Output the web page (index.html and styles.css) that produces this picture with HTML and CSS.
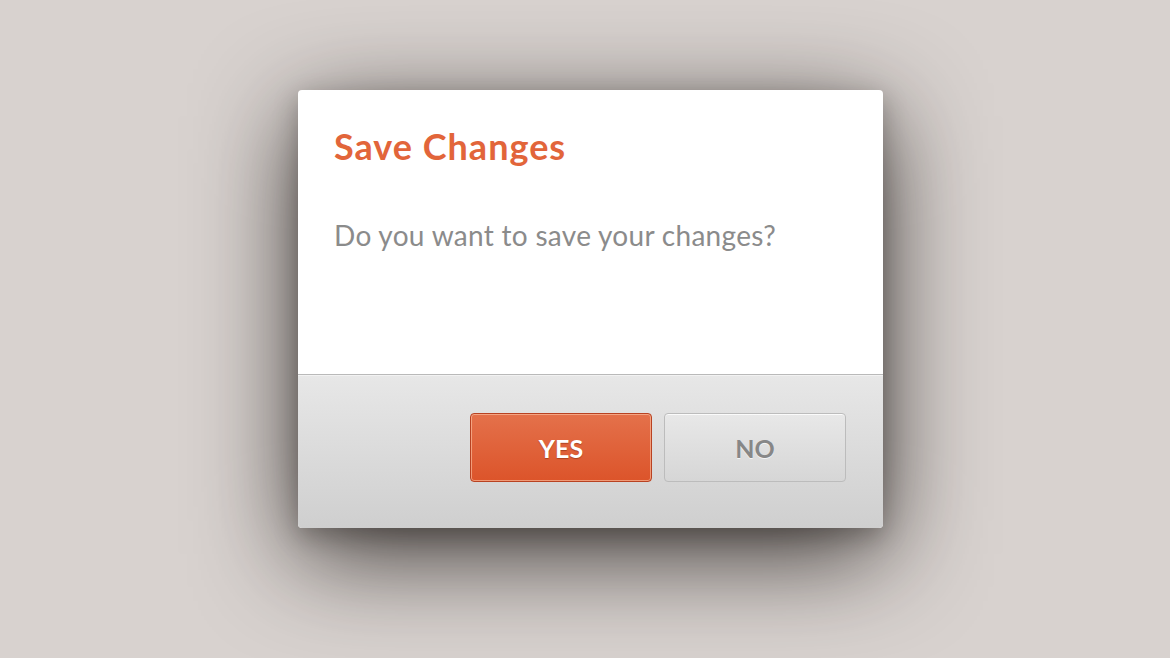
FILE: index.html
```html
<!DOCTYPE html>
<html>
<head>
<meta charset="utf-8">
<link rel="stylesheet" href="styles.css">
</head>
<body>
<div class="stage">
  <div class="dialog">
    <div class="content">
      <h1 class="title">Save Changes</h1>
      <p class="message">Do you want to save your changes?</p>
    </div>
    <div class="footer">
      <button class="btn btn-yes">YES</button>
      <button class="btn btn-no">NO</button>
    </div>
  </div>
</div>
</body>
</html>
```
FILE: styles.css
```css
html, body {
  margin: 0;
  padding: 0;
  width: 1170px;
  height: 658px;
  overflow: hidden;
  background: #d8d2cf;
  font-family: Lato, "Open Sans", sans-serif;
}
.stage {
  width: 1170px;
  height: 658px;
  display: flex;
  justify-content: flex-start;
  padding: 90px 0 0 298px;
  box-sizing: border-box;
}
.dialog {
  width: 585px;
  height: 438px;
  border-radius: 4px;
  background: #fff;
  display: flex;
  flex-direction: column;
  overflow: hidden;
  box-shadow: 0 26px 100px rgba(20, 15, 12, 0.8), 0 8px 24px rgba(20, 15, 12, 0.25);
}
.content {
  height: 285px;
  padding: 34px 36px 0 36px;
  box-sizing: border-box;
  border-bottom: 1px solid #b9b9b9;
}
.title {
  margin: 0;
  font-size: 36px;
  line-height: 44px;
  font-weight: 700;
  letter-spacing: 1px;
  color: #e2653a;
}
.message {
  margin: 50px 0 0 0;
  font-size: 28px;
  line-height: 34px;
  font-weight: 400;
  letter-spacing: 0.3px;
  color: #8b8b8b;
}
.footer {
  flex: 1;
  display: flex;
  justify-content: flex-end;
  align-items: flex-start;
  gap: 12px;
  padding: 37px 37px 0 0;
  background: linear-gradient(#e7e7e7, #cfcfcf);
  border-top: 1px solid #f2f2f2;
}
.btn {
  width: 182px;
  height: 69px;
  border-radius: 4px;
  font-family: Lato, "Open Sans", sans-serif;
  font-size: 25px;
  font-weight: 700;
  cursor: pointer;
  padding: 0;
}
.btn-yes {
  color: #fff;
  background: linear-gradient(#e4714b, #dc542a);
  border: 1px solid #b84222;
  box-shadow: inset 0 0 0 1px rgba(255, 200, 170, 0.6);
  text-shadow: 0 1px 1px rgba(120, 40, 10, 0.5);
}
.btn-no {
  color: #878787;
  background: linear-gradient(#e8e8e8, #d6d6d6);
  border: 1px solid #bcbcbc;
  box-shadow: inset 0 1px 0 rgba(255, 255, 255, 0.8);
  text-shadow: 0 1px 0 rgba(255, 255, 255, 0.7);
}
```
